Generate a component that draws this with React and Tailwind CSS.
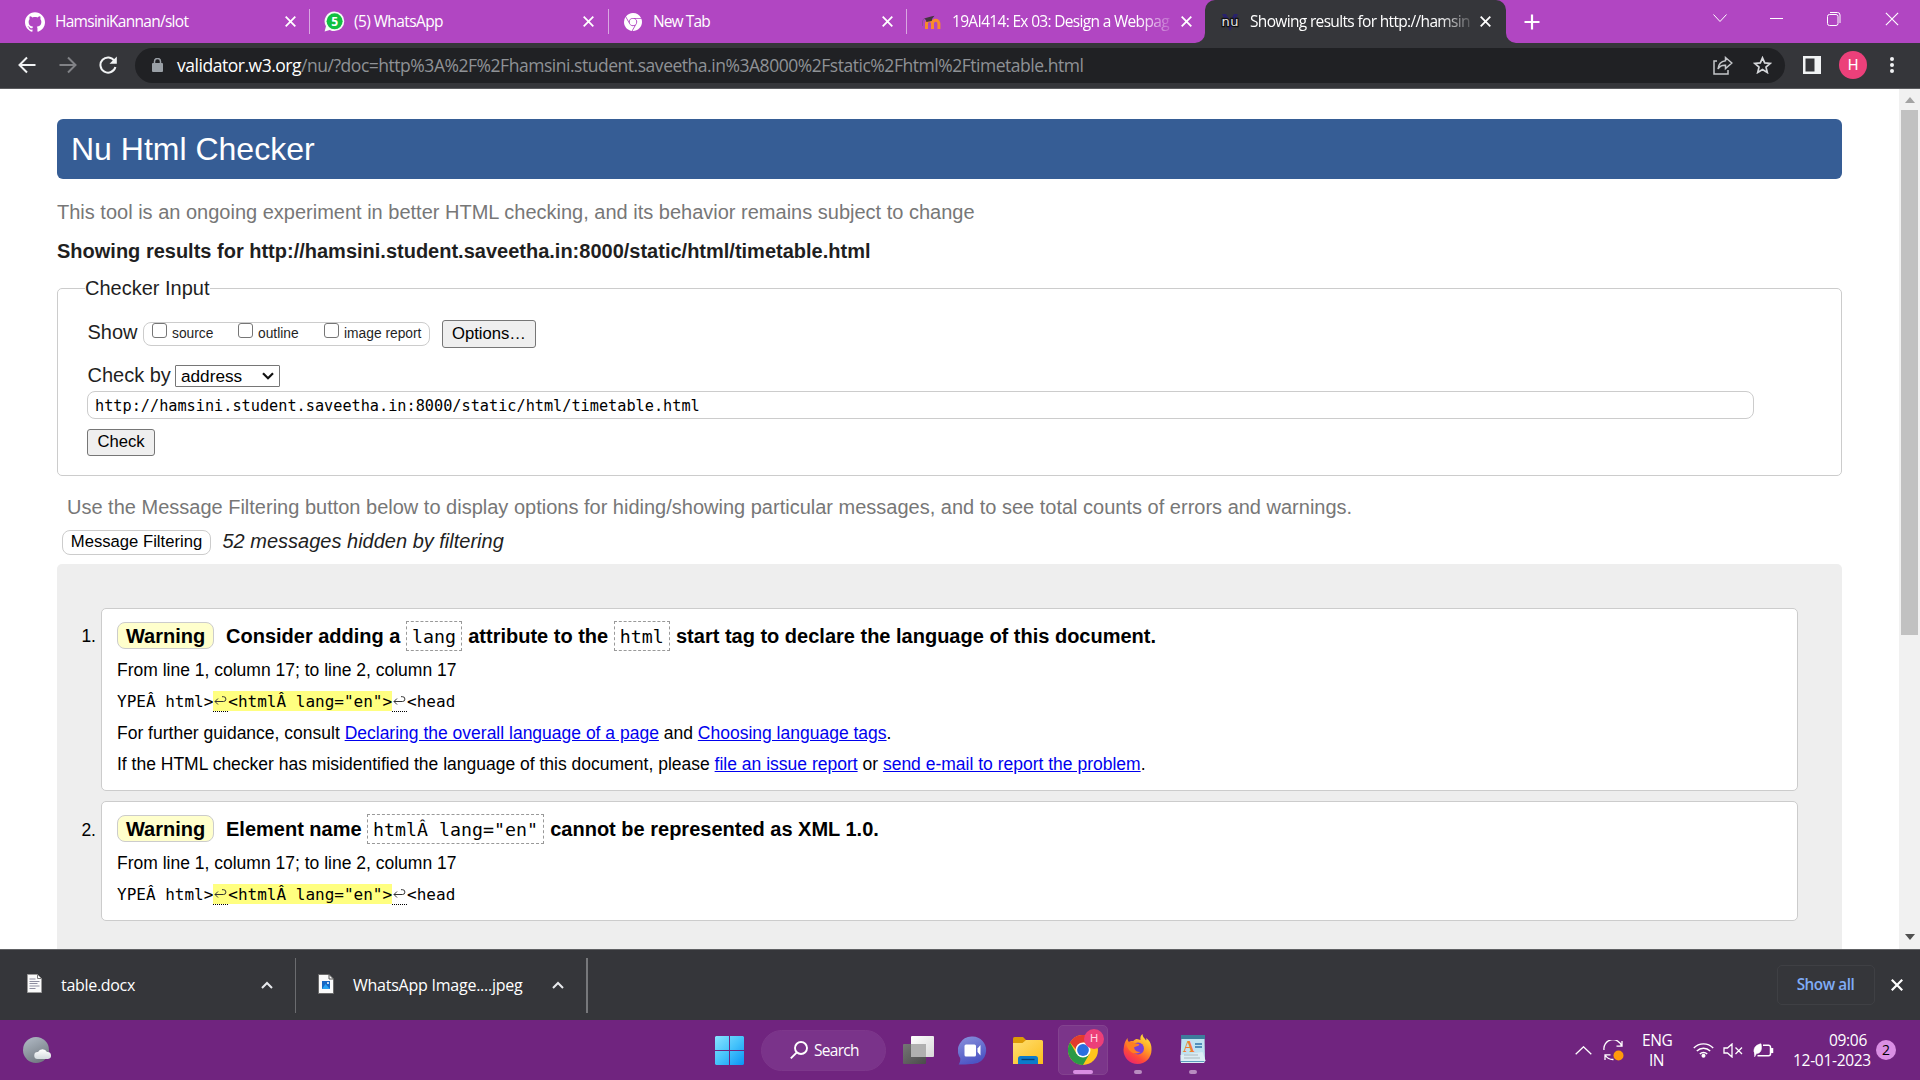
import React from "react";
import { SiGithub, SiGooglechrome } from "react-icons/si";

const X = ({ className = "", s = 11, w = 1.8 }) => (
  <svg className={"shrink-0 " + className} width={s} height={s} viewBox="0 0 11 11" fill="none" stroke="currentColor" strokeWidth={w}>
    <path d="M.7 .7L10.3 10.3M10.3 .7L.7 10.3" />
  </svg>
);

function Whatsapp() {
  return (
    <svg width="21" height="21" viewBox="0 0 21 21" className="shrink-0">
      <path d="M10.5 .5a9.8 9.8 0 0 1 0 19.6c-1.7 0-3.3-.4-4.7-1.2L.6 20.4 2 15.3A9.8 9.8 0 0 1 10.5 .5z" fill="#f3fbf4" />
      <circle cx="10.6" cy="10.3" r="8" fill="#10c040" />
      <text x="10.6" y="14.6" textAnchor="middle" fontFamily="Open Sans, sans-serif" fontWeight="700" fontSize="12" fill="#fff">5</text>
    </svg>
  );
}

function Moodle() {
  return (
    <svg width="20" height="20" viewBox="0 0 20 20" className="shrink-0">
      <path d="M5.500 17v-5.500a3 3 0 0 1 6 0V17M11.500 11.500a3.200 3.200 0 0 1 6.400 0V17" fill="none" stroke="#f98a2c" strokeWidth="3" />
      <path d="M3 6.500L10 4.500l3.500-.8-2.300 3-.4 2.300-5.500 1-.3-2z" fill="#43343f" />
      <path d="M3 6.500L1.500 9v5" fill="none" stroke="#8d4f97" strokeWidth="1" />
    </svg>
  );
}

function NuLogo() {
  return (
    <svg width="20" height="20" viewBox="0 0 20 20" className="shrink-0">
      <path d="M2 2l8 17 8-17h-4l-4 7-4-7z" fill="#29226b" />
      <text x="10" y="14" textAnchor="middle" fontFamily="DejaVu Sans, sans-serif" fontSize="13" textLength="17" fill="#e8e8e8" stroke="#111" strokeWidth="2.4" paintOrder="stroke">nu</text>
    </svg>
  );
}

function Tabs() {
  return (
    <div className="flex h-[43px] items-center bg-[#b146c2] text-[15.5px] leading-[42px] text-white">
      <div className="flex h-full w-[310px] items-center pl-[25px]">
        <SiGithub size={20} className="shrink-0" />
        <span className="mb-[2px] ml-[10px] w-[230px] whitespace-nowrap tracking-[-0.72px]">HamsiniKannan/slot</span>
        <X />
        <span className="ml-[13px] h-[25px] w-px shrink-0 bg-[#d9a8e1]" />
      </div>
      <div className="flex h-full w-[299px] items-center pl-[14px]">
        <Whatsapp />
        <span className="mb-[2px] ml-[9px] w-[230px] whitespace-nowrap tracking-[-0.6px]">(5) WhatsApp</span>
        <X />
        <span className="ml-[14px] h-[25px] w-px shrink-0 bg-[#d9a8e1]" />
      </div>
      <div className="flex h-full w-[298px] items-center pl-[15px]">
        <SiGooglechrome size={18} className="shrink-0" />
        <span className="mb-[2px] ml-[11px] w-[229px] whitespace-nowrap tracking-[-0.9px]">New Tab</span>
        <X />
        <span className="ml-[13px] h-[25px] w-px shrink-0 bg-[#d9a8e1]" />
      </div>
      <div className="flex h-full w-[298px] items-center pl-[14px]">
        <Moodle />
        <span className="mb-[2px] ml-[11px] mr-[11px] w-[218px] whitespace-nowrap tracking-[-0.68px] [mask-image:linear-gradient(to_right,#000_86%,transparent_103%)]">19AI414: Ex 03: Design a Webpag</span>
        <X />
      </div>
      <div className="relative flex h-full w-[301px] items-center rounded-t-[10px] bg-[#35363a] pl-[15px]">
        <svg className="absolute bottom-0 left-[-10px]" width="10" height="10"><path d="M10 0v10H0A10 10 0 0 0 10 0z" fill="#35363a" /></svg>
        <svg className="absolute bottom-0 right-[-10px]" width="10" height="10"><path d="M0 0v10h10A10 10 0 0 1 0 0z" fill="#35363a" /></svg>
        <NuLogo />
        <span className="mb-[2px] ml-[10px] mr-[10px] w-[220px] whitespace-nowrap tracking-[-0.66px] [mask-image:linear-gradient(to_right,#000_86%,transparent_103%)]">Showing results for http://hamsin</span>
        <X />
      </div>
      <svg className="ml-[18px]" width="16" height="16" viewBox="0 0 16 16" stroke="#fff" strokeWidth="2.2"><path d="M8 .5v15M.5 8h15" /></svg>
      <svg className="mb-[7px] ml-[173px]" width="14" height="9" viewBox="0 0 14 9" fill="none" stroke="#fff" strokeWidth="1"><path d="M.5 .5L7 7.500l6.500-7" /></svg>
      <span className="mb-[7px] ml-[43px] h-px w-[13px] bg-white" />
      <svg className="mb-[6px] ml-[44px]" width="14" height="14" viewBox="0 0 14 14" fill="none" stroke="#fff" strokeWidth="1"><rect x=".5" y="2.500" width="10.500" height="11" rx="2" /><path d="M3 .5h7.500a2.500 2.500 0 0 1 2.500 2.500v8" /></svg>
      <X className="mb-[6px] ml-[44px]" s={14} w={0.9} />
    </div>
  );
}

function Toolbar() {
  return (
    <div className="flex h-[46px] items-center border-b border-[#5b5c5f] bg-[#35363a] pb-px">
      <svg className="ml-[18px]" width="18" height="18" viewBox="0 0 18 18" fill="none" stroke="#f1f3f4" strokeWidth="2"><path d="M17.500 9H2M9 1.500L1.500 9 9 16.500" /></svg>
      <svg className="ml-[23px]" width="18" height="18" viewBox="0 0 18 18" fill="none" stroke="#818286" strokeWidth="2"><path d="M.5 9H16M9 1.500L16.500 9 9 16.500" /></svg>
      <svg className="ml-[22px]" width="18" height="18" viewBox="0 0 18 18" fill="none" stroke="#f1f3f4" strokeWidth="2"><path d="M15.500 5A7.600 7.600 0 1 0 16.400 11" /><path d="M17.800 .4v7.300h-7.300z" fill="#f1f3f4" stroke="none" /></svg>
      <div className="ml-[18px] flex h-[35px] w-[1650px] items-center rounded-full bg-[#202124] pl-[17px]">
        <svg width="11" height="14" viewBox="0 0 11 14"><rect y="5" width="11" height="9" rx="1" fill="#9aa0a6" /><path d="M2.500 6V3.500a3 3 0 0 1 6 0V6" fill="none" stroke="#9aa0a6" strokeWidth="1.500" /></svg>
        <div className="ml-[14px] w-[1536px] whitespace-nowrap text-[17.5px] tracking-[-0.47px] text-[#8f9296]"><span className="text-white">validator.w3.org</span>/nu/?doc=http%3A%2F%2Fhamsini.student.saveetha.in%3A8000%2Fstatic%2Fhtml%2Ftimetable.html</div>
        <svg className="shrink-0" width="20" height="19" viewBox="0 0 20 19" fill="none" stroke="#c4c6c9" strokeWidth="1.500"><path d="M4 5H1v13h14v-4" /><path d="M12.500 1.500L18.800 7l-6.300 5.500V9.200C9 9 6.500 10.300 5 13c.4-4.500 3-7.700 7.500-8.300z" /></svg>
        <svg className="ml-[20px] shrink-0" width="19" height="18" viewBox="0 0 19 18" fill="none" stroke="#d5d7da" strokeWidth="1.700"><path d="M9.500 1.800l2.200 5.100 5.500.5-4.200 3.700 1.300 5.400-4.800-2.900-4.800 2.900L6 11.100 1.800 7.400l5.500-.5z" /></svg>
      </div>
      <svg className="ml-[18px]" width="18" height="18" viewBox="0 0 18 18"><path d="M0 0h18v18H0zM2.500 2.500v13h9v-13z" fill="#f1f3f4" fillRule="evenodd" /></svg>
      <div className="ml-[18px] flex size-[28px] items-center justify-center rounded-full bg-[#ec407a] font-[Roboto] text-[15px] leading-none text-white">H</div>
      <div className="ml-[23px] flex flex-col gap-[2px]">
        <span className="size-[4px] rounded-full bg-[#f1f3f4]" /><span className="size-[4px] rounded-full bg-[#f1f3f4]" /><span className="size-[4px] rounded-full bg-[#f1f3f4]" />
      </div>
    </div>
  );
}

const Check = ({ label, className }) => (
  <label className={"flex h-full " + className}>
    <span className="h-[15px] w-[15px] shrink-0 rounded-[3px] border border-[#767676] bg-white" />
    <span className="ml-[5px] whitespace-nowrap text-[13.8px] leading-[22px]">{label}</span>
  </label>
);

const Code = ({ children }) => (
  <code className="ml-[5.500px] mr-[6.300px] flex h-[30px] items-center border border-dashed border-[#999] px-[5px] pt-[2px] font-['DejaVu_Sans_Mono',monospace] text-[18.25px] font-normal">{children}</code>
);

const Ret = () => (
  <span className="flex h-[21px] w-[15px] items-center justify-center border-b border-dotted border-black">
    <svg width="13" height="10" viewBox="0 0 13 10" fill="none" stroke="#333" strokeWidth="1"><path d="M4 2.500L1 5.500l3 3M1 5.500h8.500a2.400 2.400 0 0 0 0-4.800H8" /></svg>
  </span>
);

const Extract = () => (
  <div className="mt-[11px] flex h-[20px] items-start whitespace-pre font-['DejaVu_Sans_Mono',monospace] text-[16px] leading-[22px]">
    <span>YPEÂ html&gt;</span>
    <span className="flex h-[20px] bg-[#ffff80]"><Ret />&lt;htmlÂ lang="en"&gt;</span>
    <Ret />
    <span>&lt;head</span>
  </div>
);

const Warning = () => (
  <strong className="mb-px mr-[12px] flex h-[27px] w-[97px] items-center justify-center rounded-[8px] border border-[#ccc] bg-[#ffffcc] pt-px">Warning</strong>
);

const Link = ({ children }) => <a className="text-[#0000ee] underline">{children}</a>;

function Item({ n, className, children }) {
  return (
    <li className="flex">
      <span className="mt-[17px] w-[44px] pr-[5px] text-right text-[17.5px] leading-[22px]">{n}</span>
      <div className={"w-[1697px] rounded-[5px] border border-[#ccc] bg-white pl-[15px] pt-[12px] text-[17.5px] " + className}>{children}</div>
    </li>
  );
}

function Page() {
  return (
    <div className="flex h-[860px] overflow-hidden bg-white font-['Liberation_Sans',Arial,sans-serif] text-[20px] leading-[24px] text-[#1f1f1f]">
      <main className="ml-[57px] flex w-[1785px] flex-col whitespace-nowrap">
        <h1 className="mt-[30px] h-[60px] shrink-0 rounded-[6px] bg-[#365d95] pl-[14px] text-[32px] leading-[60px] text-white">Nu Html Checker</h1>
        <p className="mt-[21px] text-[#777]">This tool is an ongoing experiment in better HTML checking, and its behavior remains subject to change</p>
        <h2 className="mt-[15px] font-bold">Showing results for http://hamsini.student.saveetha.in:8000/static/html/timetable.html</h2>
        <fieldset className="mt-[13px] h-[200px] shrink-0 rounded-[5px] border border-[#ccc] pl-[30px]">
          <legend className="-ml-[3px] h-[24px]">Checker Input</legend>
          <div className="-ml-px mt-[20px] flex h-[28px]">
            <span className="w-[56px] pl-[0.5px]">Show</span>
            <div className="mt-[2px] flex h-[24px] w-[287px] rounded-[8px] border border-[#ccc]">
              <Check label="source" className="ml-[8px] w-[86px]" />
              <Check label="outline" className="w-[86px]" />
              <Check label="image report" className="" />
            </div>
            <span className="ml-[12px] flex h-[28px] w-[94px] items-center justify-center rounded-[3px] border border-[#767676] bg-[#efefef] pb-px text-[16.67px] text-black">Options…</span>
          </div>
          <div className="-ml-px mt-[17px] flex h-[22px]">
            <span className="w-[88px] pl-[0.5px] leading-[21px]">Check by</span>
            <span className="flex h-[22px] w-[105px] items-center justify-between rounded-[1px] border border-[#767676] pl-[5px] pr-[5px] text-[17.2px] text-black">
              address
              <svg width="12" height="8" viewBox="0 0 12 8" fill="none" stroke="#111" strokeWidth="2.200"><path d="M1 1.200l5 5 5-5" /></svg>
            </span>
          </div>
          <div className="-ml-px mt-[4px] flex h-[28px] w-[1667px] items-center rounded-[8px] border border-[#ccc] pl-[7px] pt-[2px] font-['DejaVu_Sans_Mono',monospace] text-[15.23px] text-black">http://hamsini.student.saveetha.in:8000/static/html/timetable.html</div>
          <span className="-ml-px mt-[10px] flex h-[27px] w-[68px] items-center justify-center rounded-[3px] border border-[#767676] bg-[#efefef] pb-px text-[16.67px] text-black">Check</span>
        </fieldset>
        <p className="ml-[10px] mt-[19px] text-[#777]">Use the Message Filtering button below to display options for hiding/showing particular messages, and to see total counts of errors and warnings.</p>
        <div className="ml-[5px] mt-[11px] flex h-[24px] shrink-0">
          <span className="flex h-[25px] w-[149px] items-center justify-center rounded-[8px] border border-[#ccc] pb-[2px] text-[16.67px] text-black">Message Filtering</span>
          <i className="ml-[11.500px] leading-[22px]">52 messages hidden by filtering</i>
        </div>
        <ol className="mt-[10px] flex flex-1 flex-col gap-[11px] rounded-t-[5px] bg-[#eee] pt-[44px] text-black">
          <Item n="1." className="h-[183px]">
            <div className="flex h-[30px] items-center text-[20px] font-bold">
              <Warning />Consider adding a<Code>lang</Code>attribute to the<Code>html</Code>start tag to declare the language of this document.
            </div>
            <p className="mt-[9px] leading-[20px]">From line 1, column 17; to line 2, column 17</p>
            <Extract />
            <p className="mt-[12px] leading-[20px]">For further guidance, consult <Link>Declaring the overall language of a page</Link> and <Link>Choosing language tags</Link>.</p>
            <p className="mt-[11px] leading-[20px]">If the HTML checker has misidentified the language of this document, please <Link>file an issue report</Link> or <Link>send e-mail to report the problem</Link>.</p>
          </Item>
          <Item n="2." className="-mt-px h-[120px]">
            <div className="flex h-[30px] items-center text-[20px] font-bold">
              <Warning />Element name<Code>htmlÂ lang="en"</Code>cannot be represented as XML 1.0.
            </div>
            <p className="mt-[9px] leading-[20px]">From line 1, column 17; to line 2, column 17</p>
            <Extract />
          </Item>
        </ol>
      </main>
      <aside className="ml-auto flex w-[21px] flex-col items-center bg-[#f1f1f1]">
        <svg className="mt-[8px]" width="10" height="6"><path d="M5 0l5 6H0z" fill="#a3a3a3" /></svg>
        <span className="mt-[7px] h-[525px] w-[17px] bg-[#c1c1c1]" />
        <svg className="mb-[9px] mt-auto" width="10" height="6"><path d="M0 0h10L5 6z" fill="#505050" /></svg>
      </aside>
    </div>
  );
}

const Chev = ({ className }) => (
  <svg className={className} width="12" height="8" viewBox="0 0 12 8" fill="none" stroke="#e8eaed" strokeWidth="2"><path d="M1 7l5-5 5 5" /></svg>
);

function Downloads() {
  return (
    <div className="flex h-[71px] items-center border-t border-[#606164] bg-[#35363a] text-[16px] text-white">
      <svg className="mb-[4px] ml-[27px]" width="15" height="19" viewBox="0 0 15 19"><path d="M.5 .5h10l4 4v14H.5z" fill="#fafafa" stroke="#9a9a9a" /><path d="M10.500 .5v4h4" fill="none" stroke="#777" /><path d="M2.500 5h6M2.500 7.500h10M2.500 9.500h8M2.500 12h10M2.500 14.500h6" stroke="#8e8ea0" /></svg>
      <span className="ml-[19px] w-[200px] whitespace-nowrap tracking-[-0.3px]">table.docx</span>
      <Chev />
      <span className="ml-[22px] h-[55px] w-px bg-[#6b6c6f]" />
      <svg className="mb-[3px] ml-[22px]" width="16" height="20" viewBox="0 0 16 20"><path d="M.5 .5h10.500l4.500 4.500v14.500H.5z" fill="#fafafa" stroke="#6b6b6b" /><path d="M11 .5V5h4.500" fill="none" stroke="#555" /><rect x="4" y="7" width="8" height="8" fill="#1767c4" /><path d="M4 15l3.500-5 4.500 5z" fill="#29a3f2" /><circle cx="10" cy="9" r="1" fill="#fff" /></svg>
      <span className="ml-[19px] w-[199px] whitespace-nowrap tracking-[-0.24px]">WhatsApp Image....jpeg</span>
      <Chev />
      <span className="ml-[22px] h-[55px] w-[2px] bg-[#77787b]" />
      <span className="ml-auto flex h-[40px] w-[98px] items-center justify-center rounded-[5px] border border-[#3f4044] pb-[2px] pr-px text-[15.3px] font-semibold tracking-[-0.45px] text-[#80acf6]">Show all</span>
      <X className="mb-px ml-[16px] mr-[17px]" s={12} w={2} />
    </div>
  );
}

function Taskbar() {
  return (
    <div className="flex h-[60px] items-center bg-[#70247f] text-[15.5px] text-white">
      <svg className="ml-[22px]" width="30" height="28" viewBox="0 0 30 28">
        <defs>
          <linearGradient id="moon" x2=".5" y2="1"><stop stopColor="#b4bdc8" /><stop offset="1" stopColor="#757d85" /></linearGradient>
          <linearGradient id="cl" x2="0" y2="1"><stop stopColor="#fff" /><stop offset="1" stopColor="#d3dade" /></linearGradient>
        </defs>
        <circle cx="14" cy="14" r="13" fill="url(#moon)" />
        <path d="M15.500 23a3.500 3.500 0 0 1 .5-7 5 5 0 0 1 9 0 3.500 3.500 0 0 1 1 7z" fill="url(#cl)" />
      </svg>
      <svg className="ml-[663px]" width="29" height="29" viewBox="0 0 29 29">
        <defs><linearGradient id="win" x2="1" y2="1"><stop stopColor="#8ae2ff" /><stop offset=".5" stopColor="#45c3fb" /><stop offset="1" stopColor="#0a93f5" /></linearGradient></defs>
        <path d="M1 0h13v14H0V1zM15 0h13l1 1v13H15zM0 15h14v14H1l-1-1zM15 15h14v13l-1 1H15z" fill="url(#win)" />
      </svg>
      <div className="ml-[17px] flex h-[41px] w-[125px] items-center rounded-full border border-[#7d378b] bg-[#7a338a] pl-[28px]">
        <svg width="18" height="18" viewBox="0 0 18 18" fill="none" stroke="#fff" strokeWidth="1.900"><circle cx="11" cy="7" r="6" /><path d="M6.800 11.300L.8 17.300" /></svg>
        <span className="ml-[6px] mt-px tracking-[-0.7px]">Search</span>
      </div>
      <svg className="ml-[17px]" width="31" height="29" viewBox="0 0 31 29">
        <defs><linearGradient id="tv" x2="1" y2="1"><stop stopColor="#fff" /><stop offset="1" stopColor="#d8d8d8" /></linearGradient><linearGradient id="td" x2="1" y2="1"><stop stopColor="#757575" /><stop offset="1" stopColor="#4b4b4b" /></linearGradient></defs>
        <rect y="8" width="23" height="20" rx="1" fill="url(#td)" /><rect x="8" width="23" height="21" rx="1" fill="url(#tv)" /><rect x="8" y="8" width="15" height="13" fill="#b0b0b0" />
      </svg>
      <svg className="ml-[24px]" width="29" height="29" viewBox="0 0 29 29">
        <defs><linearGradient id="ch" x2=".4" y2="1"><stop stopColor="#8a92dc" /><stop offset="1" stopColor="#4c55c4" /></linearGradient></defs>
        <path d="M14.700 .5a13.800 13.800 0 1 1-2 27.500c-3 .5-8 .5-12 .5 1.200-2 1.800-4 1.500-6.500A13.900 13.900 0 0 1 14.700 .5z" fill="url(#ch)" />
        <rect x="6.500" y="8.500" width="11.500" height="12" rx="1.500" fill="#fff" /><path d="M19.500 12.500l3-3.500v10.500l-3-3.500z" fill="#fff" />
      </svg>
      <svg className="ml-[26px]" width="30" height="27" viewBox="0 0 30 27">
        <defs><linearGradient id="fo" x2="1" y2="1"><stop stopColor="#ffdf73" /><stop offset="1" stopColor="#fbbd1b" /></linearGradient></defs>
        <path d="M0 1.500Q0 0 1.500 0H10l3 3v6H0z" fill="#dd9a06" /><path d="M0 6h9.500l3.500-3h15.500Q30 3 30 4.500V27H0z" fill="url(#fo)" />
        <path d="M5 27v-5.500Q5 19 7.500 19h15Q25 19 25 21.500V27z" fill="#0c7bcb" /><path d="M8.500 22.500h13" stroke="#063f76" strokeWidth="1.300" />
      </svg>
      <div className="relative ml-[15px] flex h-[50px] w-[50px] flex-col items-center rounded-[5px] border border-[#83428f] bg-[#7b358a]">
        <svg className="mt-[9px]" width="30" height="30" viewBox="0 0 30 30">
          <circle cx="15" cy="15" r="15" fill="#ffc51c" />
          <path d="M2 7.500A15 15 0 0 1 28 7.500H15v8H9z" fill="#e33b2e" />
          <path d="M2 7.500A15 15 0 0 0 15 30l6.500-11.200H8.500z" fill="#2a9a47" />
          <circle cx="15" cy="15" r="7.500" fill="#fff" /><circle cx="15" cy="15" r="5.900" fill="#2a6fe0" />
        </svg>
        <span className="absolute right-[3px] top-[3px] flex size-[20px] items-center justify-center rounded-full bg-[#ec3f78] font-[Roboto] text-[11.5px] text-[#ffd5e2]">H</span>
        <span className="mt-[5px] h-[4px] w-[20px] shrink-0 rounded-full bg-[#d98ee3]" />
      </div>
      <div className="ml-[15px] flex h-[50px] w-[29px] flex-col items-center pt-[9px]">
        <svg width="29" height="30" viewBox="0 0 29 30" className="shrink-0">
          <defs>
            <linearGradient id="ff" x1=".8" x2=".2" y2="1"><stop stopColor="#ffe83b" /><stop offset=".4" stopColor="#ff9a26" /><stop offset=".7" stopColor="#ff4a38" /><stop offset="1" stopColor="#e81f75" /></linearGradient>
          </defs>
          <path d="M1 12C1.500 9 2.500 6.500 4.500 4c0 2 .5 3 1.500 4 2-1 3-1 4-.8 1.500-1.700 3-2.200 4-2.200L17.500 6C17 3.500 17.500 1.500 19.500 0c0 3 2 4 3.500 6.500.5-.8.5-1.500 0-2.500C27 6.500 28.800 11 28.500 16a14 14 0 0 1-28 0z" fill="url(#ff)" />
          <circle cx="15" cy="14.500" r="6" fill="#7a3fd6" />
          <path d="M3 9c3-1.800 6-1.500 8.500 0 2 .8 4 .8 5 1.500-1 2-4 1.800-5.500 3 .5 3 3 4.500 6.500 4.500-4 3-12 2-14.500-9z" fill="#ff7f22" />
        </svg>
        <span className="mt-[6px] h-[4px] w-[8px] shrink-0 rounded-full bg-[#b88cc0]" />
      </div>
      <div className="ml-[28px] flex h-[50px] w-[26px] flex-col items-center pt-[10px]">
        <svg width="26" height="29" viewBox="0 0 26 29" className="shrink-0">
          <path d="M1.500 0h23L25 26H.5z" fill="#bfe3f0" /><path d="M1 0h24v4H1z" fill="#3d7c9c" /><path d="M.5 20l22-3 3 8.500L24 28H1z" fill="#dcedf4" /><path d="M.5 26.500h24" stroke="#5b9dbd" strokeWidth="1" />
          <text x="3" y="17" fontFamily="Liberation Serif, serif" fontWeight="700" fontSize="16" fill="#f08030">A</text>
          <path d="M15 9h7M15 12h7" stroke="#2f74a8" strokeWidth="1.500" /><path d="M4 20h14M4 23h16" stroke="#a8b9c0" />
        </svg>
        <span className="mt-[6px] h-[4px] w-[8px] shrink-0 rounded-full bg-[#b88cc0]" />
      </div>
      <svg className="ml-auto" width="17" height="9" viewBox="0 0 17 9" fill="none" stroke="#fff" strokeWidth="1.300"><path d="M.7 8.300L8.500 .8l7.800 7.500" /></svg>
      <svg className="ml-[11px]" width="21" height="21" viewBox="0 0 21 21" fill="none" stroke="#fff" strokeWidth="1.300"><path d="M1 10A9 9 0 0 1 18.500 6M19 1v5.200h-5.500M2 20v-5.200h5.500M2.500 15.500a9 9 0 0 0 8 4" /><circle cx="15.500" cy="15.500" r="5" fill="#ff9a0a" stroke="none" /></svg>
      <div className="ml-[18px] w-[29px] text-center leading-[20px] tracking-[-0.4px]">ENG<br />IN</div>
      <svg className="ml-[22px]" width="21" height="16" viewBox="0 0 21 16" fill="none" stroke="#fff" strokeWidth="1.400"><path d="M.8 6a13.500 13.500 0 0 1 19.400 0M3.800 9a9.500 9.500 0 0 1 13.400 0M6.800 12a5.300 5.300 0 0 1 7.400 0" /><circle cx="10.500" cy="13.700" r="2" fill="#fff" stroke="none" /></svg>
      <svg className="ml-[9px]" width="20" height="15" viewBox="0 0 20 15" fill="none" stroke="#fff" strokeWidth="1.300"><path d="M1 5v5h3.500L9 14V1L4.500 5zM12.500 4.500l6.500 6.500M19 4.500L12.500 11" /></svg>
      <svg className="ml-[10px]" width="21" height="15" viewBox="0 0 21 15" fill="none" stroke="#fff" strokeWidth="1.500"><path d="M10 2.200h5.500a2 2 0 0 1 2 2v6.600a2 2 0 0 1-2 2H4.500" /><path d="M18.500 5.800h1v3.500h-1z" fill="#fff" /><path d="M1 9C.5 4 4 1.500 8 .8 9.300 6 8 10.500 3.500 10.500L1.500 14" fill="#fff" strokeWidth=".6" /></svg>
      <div className="ml-[19px] w-[74px] whitespace-nowrap text-right leading-[20px] tracking-[-0.3px]">09:06<br />12-01-2023</div>
      <span className="ml-[9px] mr-[24px] flex size-[20px] shrink-0 items-center justify-center rounded-full bg-[#da8fe4] text-[14px] leading-none text-black">2</span>
    </div>
  );
}

export default function App() {
  return (
    <div className="h-[1080px] w-[1920px] overflow-hidden font-['Open_Sans','Noto_Sans',sans-serif]">
      <Tabs />
      <Toolbar />
      <Page />
      <Downloads />
      <Taskbar />
    </div>
  );
}
